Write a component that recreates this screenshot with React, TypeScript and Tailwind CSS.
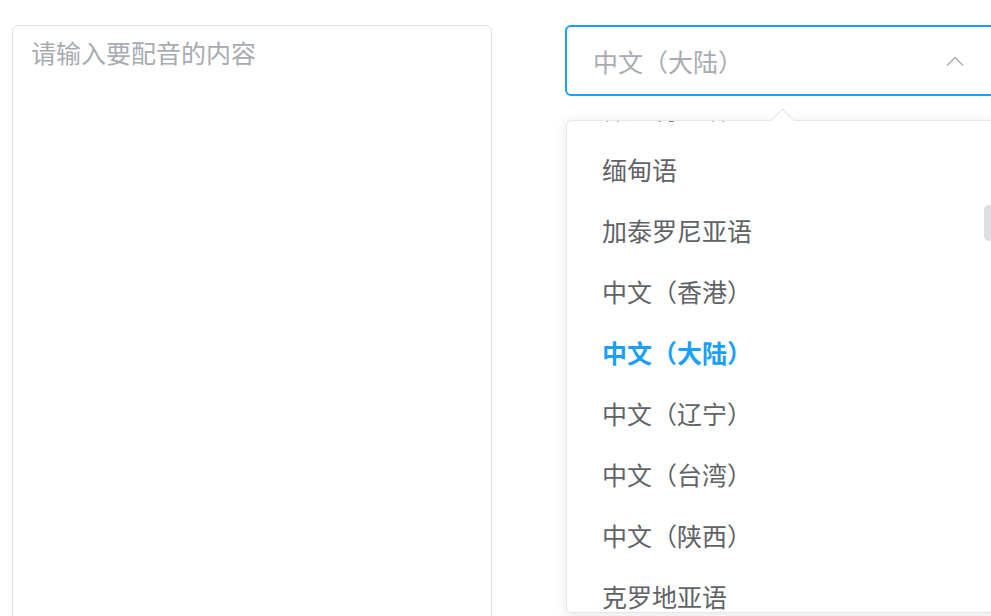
import React from "react";

const items = [
  "保加利亚语",
  "缅甸语",
  "加泰罗尼亚语",
  "中文（香港）",
  "中文（大陆）",
  "中文（辽宁）",
  "中文（台湾）",
  "中文（陕西）",
  "克罗地亚语",
  "捷克语",
];

export default function App() {
  return (
    <div
      className="w-[991px] h-[616px] overflow-hidden bg-white"
      style={{ fontFamily: '"Noto Sans CJK SC", "Noto Sans", sans-serif' }}
    >
      <div className="flex items-start gap-[73px] pl-[12px] pt-[25px]">
        <div className="w-[480px] h-[640px] shrink-0 rounded-[6px] border border-[#dcdfe6] pl-[18px] pt-[8px] text-[25px] leading-[37px] text-[#a8abb2]">
          请输入要配音的内容
        </div>
        <div className="relative w-[432px] shrink-0">
          <div className="flex h-[71px] items-center justify-between rounded-[6px] border-2 border-[#1a9ffa] pl-[26px] pr-[31px]">
            <span className="text-[25px] leading-[30px] text-[#a8abb2]">中文（大陆）</span>
            <svg width="18" height="10" viewBox="0 0 18 10" fill="none">
              <path d="M1 9.5 L9 1.5 L17 9.5" stroke="#a8abb2" strokeWidth="1.3" />
            </svg>
          </div>
          <div className="absolute left-[1px] top-[95px] w-[431px] h-[493px] rounded-[6px] border border-[#e4e7ed] bg-white shadow-[0_2px_12px_0_rgba(0,0,0,0.1)]">
            <div className="absolute left-[207px] top-[-9px] h-[17px] w-[17px] rotate-45 border-l border-t border-[#e4e7ed] bg-white" />
            <div className="relative h-full overflow-hidden rounded-[6px]">
              <div className="-mt-[43px] flex flex-col">
                {items.map((t) => {
                  const sel = t === "中文（大陆）";
                  return (
                    <div
                      key={t}
                      className={
                        sel
                          ? "flex h-[61px] shrink-0 items-center pl-[35px] text-[25px] font-bold text-[#1a9ffa]"
                          : "flex h-[61px] shrink-0 items-center pl-[35px] text-[25px] text-[#606266]"
                      }
                    >
                      {t}
                    </div>
                  );
                })}
              </div>
              <div className="absolute left-[417px] top-[84px] h-[36px] w-[10px] rounded-[5px] bg-[rgba(144,147,153,0.3)]" />
            </div>
          </div>
        </div>
      </div>
    </div>
  );
}
